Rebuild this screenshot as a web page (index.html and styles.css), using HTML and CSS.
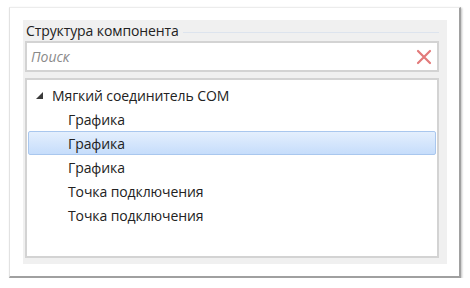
FILE: index.html
```html
<!DOCTYPE html>
<html lang="ru">
<head>
<meta charset="utf-8">
<link rel="stylesheet" href="styles.css">
</head>
<body>
<div class="window">
  <div class="panel">
    <div class="group-head">
      <span class="group-title">Структура компонента</span>
      <span class="group-line"></span>
    </div>
    <div class="search">
      <span class="placeholder">Поиск</span>
      <svg class="clear" width="16" height="16" viewBox="0 0 16 16">
        <path d="M2 2 L14 14 M14 2 L2 14" stroke="#e27a7a" stroke-width="2.2" stroke-linecap="round" fill="none"/>
      </svg>
    </div>
    <div class="tree">
      <div class="row root">
        <svg class="expander" width="7" height="7" viewBox="0 0 7 7"><polygon points="7,0 7,7 0,7" fill="#3a3a3a"/></svg>
        <span>Мягкий соединитель COM</span>
      </div>
      <div class="row child">Графика</div>
      <div class="row child selected">Графика</div>
      <div class="row child">Графика</div>
      <div class="row child">Точка подключения</div>
      <div class="row child">Точка подключения</div>
    </div>
  </div>
</div>
</body>
</html>
```
FILE: styles.css
```css
html, body {
  margin: 0;
  padding: 0;
  background: #ffffff;
}
body {
  font-family: "Open Sans", "Noto Sans", sans-serif;
  color: #222;
}
.window {
  margin: 7px 0 0 9px;
  border-left: 1px solid #e2e2e2;
  border-top: 1px solid #ececec;
  border-right: 2px solid #a0a0a0;
  border-bottom: 2px solid #a0a0a0;
  box-shadow: 1px 1px 2px rgba(0,0,0,0.25);
  background: #ffffff;
  padding: 12px 12px 12px 13px;
  box-sizing: border-box;
  width: 452px;
  height: 271px;
}
.panel {
  background: #f0f0f0;
  height: 244px;
  width: 424px;
  padding: 0 8px 0 2px;
  box-sizing: border-box;
  display: flex;
  flex-direction: column;
}
.group-head {
  display: flex;
  align-items: center;
  height: 21px;
  margin-left: 1px;
}
.group-title {
  font-size: 14px;
  line-height: 18px;
  color: #222;
  letter-spacing: -0.1px;
}
.group-line {
  flex: 1;
  height: 1px;
  background: #dde4ee;
  margin-left: 4px;
  margin-top: 3px;
}
.search {
  height: 31px;
  box-sizing: border-box;
  border: 2px solid #d3d3d3;
  background: #fff;
  display: flex;
  align-items: center;
  padding: 0 5px 0 4px;
}
.placeholder {
  flex: 1;
  font-style: italic;
  font-size: 14px;
  color: #8a8a8a;
}
.clear {
  display: block;
}
.tree {
  margin-top: 6px;
  height: 180px;
  box-sizing: border-box;
  border: 2px solid #d3d3d3;
  background: #fff;
  padding: 3px 1px 0 1px;
}
.row {
  height: 24px;
  box-sizing: border-box;
  display: flex;
  align-items: center;
  font-size: 14px;
  color: #222;
  border: 1px solid transparent;
  letter-spacing: -0.1px;
}
.root {
  padding-left: 7px;
}
.expander {
  display: block;
  margin-right: 9px;
}
.child {
  padding-left: 39px;
}
.selected {
  background: linear-gradient(#e4effd, #c6ddfb);
  border: 1px solid #a9c7ee;
  border-radius: 2px;
}
```
